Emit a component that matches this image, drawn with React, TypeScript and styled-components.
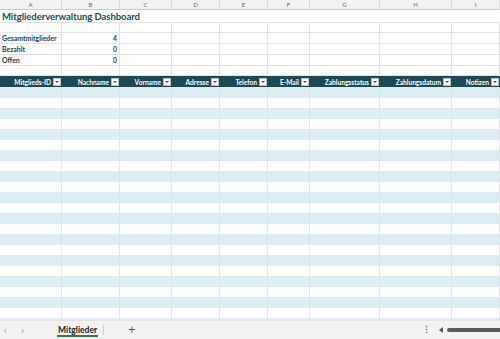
import React from "react";
import styled, { createGlobalStyle } from "styled-components";

const Global = createGlobalStyle`
  html, body { margin: 0; padding: 0; background: #fff; }
  body { font-family: Lato, "Liberation Sans", sans-serif; }
  * { box-sizing: border-box; }
`;

const COLS = "62px 58px 52px 48px 48px 42px 70px 72px 48px";
const GRID = "#e2e2e2";
const TEAL = "#1a4a55";

const Page = styled.div`
  width: 500px;
  height: 339px;
  display: flex;
  flex-direction: column;
  overflow: hidden;
`;

const Sheet = styled.div`
  flex: 1;
  overflow: hidden;
  display: flex;
  flex-direction: column;
`;

const Row = styled.div<{ $h: number }>`
  display: grid;
  grid-template-columns: ${COLS};
  height: ${(p) => p.$h}px;
  flex: none;
`;

const ColLetter = styled.div`
  display: flex;
  align-items: center;
  justify-content: center;
  background: #f2f2f2;
  border-right: 1px solid #dadada;
  border-bottom: 1px solid #c9c9c9;
  font-size: 6px;
  color: #666;
`;

const TitleRow = styled.div`
  height: 13px;
  flex: none;
  display: flex;
  align-items: center;
  padding-left: 2px;
  border-bottom: 1px solid ${GRID};
`;

const Title = styled.div`
  font-size: 9.5px;
  font-weight: 700;
  color: ${TEAL};
  white-space: nowrap;
  letter-spacing: -0.05px;
`;

const Cell = styled.div<{ $align?: "left" | "right" }>`
  display: flex;
  align-items: center;
  justify-content: ${(p) => (p.$align === "right" ? "flex-end" : "flex-start")};
  padding: 0 2px;
  border-right: 1px solid ${GRID};
  border-bottom: 1px solid ${GRID};
  font-size: 6.9px;
  font-weight: 700;
  color: #17434d;
  white-space: nowrap;
  overflow: hidden;
`;

const HeadCell = styled.div`
  display: flex;
  align-items: center;
  justify-content: flex-end;
  gap: 2px;
  padding-right: 1px;
  background: ${TEAL};
  color: #fff;
  font-size: 6.6px;
  font-weight: 700;
  white-space: nowrap;
  overflow: hidden;
`;

const Drop = styled.div`
  width: 8px;
  height: 8px;
  background: #fff;
  border: 1px solid #bfbfbf;
  display: flex;
  align-items: center;
  justify-content: center;
  flex: none;
  &::after {
    content: "";
    border-left: 2px solid transparent;
    border-right: 2px solid transparent;
    border-top: 2px solid #555;
  }
`;

const DataCell = styled.div<{ $band: boolean }>`
  background: ${(p) => (p.$band ? "#ddeef3" : "#ffffff")};
  border-right: 1px solid ${(p) => (p.$band ? "#d6e6eb" : "#e6e6e6")};
`;

const DataRow = styled.div`
  display: grid;
  grid-template-columns: ${COLS};
  height: 10.5px;
  flex: none;
`;

const TabBar = styled.div`
  height: 19px;
  flex: none;
  background: #f3f3f3;
  border-top: 1px solid #e4e4e4;
  display: flex;
  align-items: center;
  font-family: "Liberation Sans", sans-serif;
`;

const Nav = styled.span<{ $gap: number }>`
  color: #a6a6a6;
  font-size: 10px;
  width: 9px;
  text-align: center;
  margin-left: ${(p) => p.$gap}px;
`;

const Tab = styled.div`
  margin-left: 30px;
  height: 100%;
  display: flex;
  align-items: center;
  padding: 0 1px;
  position: relative;
  font-family: Lato, sans-serif;
  font-size: 8.5px;
  font-weight: 700;
  color: #222;
  &::after {
    content: "";
    position: absolute;
    left: 0;
    right: 0;
    bottom: 2px;
    height: 2px;
    background: #2b7a4b;
  }
`;

const TabSep = styled.div`
  width: 1px;
  height: 10px;
  background: #d0d0d0;
  margin-left: 5px;
`;

const Plus = styled.span`
  margin-left: 24px;
  font-size: 12px;
  color: #555;
`;

const Spacer = styled.div`
  flex: 1;
`;

const Dots = styled.span`
  color: #666;
  font-size: 9px;
  font-weight: 700;
  margin-right: 8px;
`;

const ScrollArrow = styled.span`
  width: 0;
  height: 0;
  border-top: 3px solid transparent;
  border-bottom: 3px solid transparent;
  border-right: 4px solid #555;
  margin-right: 4px;
`;

const Thumb = styled.div`
  width: 53px;
  height: 4px;
  background: #5a5a5a;
  border-radius: 2px 0 0 2px;
`;

const letters = ["A", "B", "C", "D", "E", "F", "G", "H", "I"];
const headers = [
  "Mitglieds-ID",
  "Nachname",
  "Vorname",
  "Adresse",
  "Telefon",
  "E-Mail",
  "Zahlungsstatus",
  "Zahlungsdatum",
  "Notizen",
];
const summary: [string, string][] = [
  ["Gesamtmitglieder", "4"],
  ["Bezahlt", "0"],
  ["Offen", "0"],
];

export default function App() {
  const emptyCells = (n: number) =>
    Array.from({ length: n }, (_, i) => <Cell key={i} />);
  return (
    <Page>
      <Global />
      <Sheet>
        <Row $h={10}>
          {letters.map((l) => (
            <ColLetter key={l}>{l}</ColLetter>
          ))}
        </Row>
        <TitleRow>
          <Title>Mitgliederverwaltung Dashboard</Title>
        </TitleRow>
        <Row $h={10}>{emptyCells(9)}</Row>
        {summary.map(([label, val]) => (
          <Row $h={11} key={label}>
            <Cell>{label}</Cell>
            <Cell $align="right">{val}</Cell>
            {emptyCells(7)}
          </Row>
        ))}
        <Row $h={10}>{emptyCells(9)}</Row>
        <Row $h={11}>
          {headers.map((h) => (
            <HeadCell key={h}>
              {h}
              <Drop />
            </HeadCell>
          ))}
        </Row>
        {Array.from({ length: 23 }, (_, r) => (
          <DataRow key={r}>
            {letters.map((l) => (
              <DataCell key={l} $band={r % 2 === 0} />
            ))}
          </DataRow>
        ))}
      </Sheet>
      <TabBar>
        <Nav $gap={1}>‹</Nav>
        <Nav $gap={8}>›</Nav>
        <Tab>Mitglieder</Tab>
        <TabSep />
        <Plus>+</Plus>
        <Spacer />
        <Dots>⋮</Dots>
        <ScrollArrow />
        <Thumb />
      </TabBar>
    </Page>
  );
}
